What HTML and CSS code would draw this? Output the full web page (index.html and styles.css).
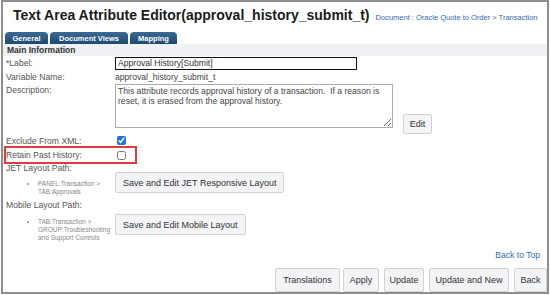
FILE: index.html
```html
<!DOCTYPE html>
<html lang="en">
<head>
    <meta charset="UTF-8">
    <title>Text Area Attribute Editor</title>
    <link rel="stylesheet" href="styles.css">
</head>
<body>
    <div class="frame">
        <div class="header">
            <h1>Text Area Attribute Editor(approval_history_submit_t)</h1>
            <a class="crumb" href="#">Document : Oracle Quote to Order &gt; Transaction</a>
        </div>
        <div class="tabs">
            <span class="tab tab-general">General</span>
            <span class="tab tab-views">Document Views</span>
            <span class="tab tab-mapping">Mapping</span>
        </div>
        <div class="band">Main Information</div>

        <div class="row row-label">
            <label>*Label:</label>
            <input type="text" class="text-input" value="Approval History[Submit]">
        </div>
        <div class="row row-var">
            <label>Variable Name:</label>
            <span class="value">approval_history_submit_t</span>
        </div>
        <div class="row row-desc">
            <label>Description:</label>
            <div class="desc-wrap">
                <textarea class="desc">This attribute records approval history of a transaction.  If a reason is reset, it is erased from the approval history.</textarea>
                <button class="btn btn-edit">Edit</button>
            </div>
        </div>
        <div class="row row-check">
            <label>Exclude From XML:</label>
            <input type="checkbox" class="check" checked>
        </div>
        <div class="row row-check row-retain">
            <label>Retain Past History:</label>
            <input type="checkbox" class="check">
        </div>

        <div class="path-title">JET Layout Path:</div>
        <div class="row row-path row-jet">
            <ul class="path-list">
                <li>PANEL:Transaction &gt;<br>TAB:Approvals</li>
            </ul>
            <button class="btn btn-layout">Save and Edit JET Responsive Layout</button>
        </div>

        <div class="path-title">Mobile Layout Path:</div>
        <div class="row row-path row-mob">
            <ul class="path-list">
                <li>TAB:Transaction &gt;<br>GROUP:Troubleshooting<br>and Support Controls</li>
            </ul>
            <button class="btn btn-layout">Save and Edit Mobile Layout</button>
        </div>

        <div class="back-top"><a href="#">Back to Top</a></div>

        <div class="actions">
            <button class="btn btn-action btn-trans">Translations</button>
            <button class="btn btn-action btn-apply">Apply</button>
            <button class="btn btn-action btn-update">Update</button>
            <button class="btn btn-action btn-new">Update and New</button>
            <button class="btn btn-action btn-back">Back</button>
        </div>
    </div>
</body>
</html>
```

FILE: styles.css
```css
body {
    margin: 0;
    font-family: "Liberation Sans", Arial, sans-serif;
    background: #fff;
    color: #444;
}
.frame {
    margin-left: 1px;
    width: 548px;
    height: 294px;
    box-sizing: border-box;
    border: 2px solid #8e8e8e;
}
.header {
    display: flex;
    align-items: baseline;
    padding: 4px 0 0 10px;
    height: 26px;
}
h1 {
    margin: 0;
    font-size: 14px;
    line-height: 18px;
    font-weight: bold;
    color: #1b1b1b;
}
.crumb {
    margin-left: 6px;
    font-size: 7.5px;
    color: #2d6cb0;
    text-decoration: none;
}
.tabs {
    display: flex;
    gap: 2px;
    padding-left: 2px;
    height: 12px;
}
.tab {
    display: flex;
    align-items: center;
    justify-content: center;
    height: 12px;
    border-radius: 4px 4px 0 0;
    background: linear-gradient(#3a6a93, #1d4a72);
    color: #fff;
    font-size: 7.5px;
    font-weight: bold;
}
.tab-general { width: 43px; }
.tab-views { width: 78px; }
.tab-mapping { width: 47px; }
.band {
    height: 12px;
    line-height: 12px;
    background: #eff1f5;
    padding-left: 4px;
    font-size: 8.5px;
    font-weight: bold;
    color: #333;
}
.row {
    display: grid;
    grid-template-columns: 109px auto;
    align-items: center;
    padding-left: 3px;
    font-size: 8.6px;
}
.row label {
    color: #555;
}
.row-label {
    height: 14px;
}
.text-input {
    width: 242px;
    height: 13px;
    box-sizing: border-box;
    border: 1.5px solid #111;
    padding: 0 2px;
    font-family: inherit;
    font-size: 8.6px;
    color: #333;
    outline: none;
}
.row-var {
    height: 12px;
    margin-top: 1px;
}
.value {
    color: #444;
}
.row-desc {
    align-items: start;
    margin-top: 1px;
    height: 50px;
}
.row-desc label {
    margin-top: 1px;
}
.desc-wrap {
    display: flex;
    align-items: flex-start;
}
.desc {
    width: 278px;
    height: 44px;
    box-sizing: border-box;
    border: 1px solid #aaa;
    padding: 1px 2px;
    resize: vertical;
    font-family: inherit;
    font-size: 8.6px;
    line-height: 10px;
    color: #444;
}
.btn {
    font-family: inherit;
    background: #f3f4f6;
    border: 1px solid #cfd3d8;
    border-radius: 2px;
    color: #333;
    padding: 0;
}
.btn-edit {
    margin: 30px 0 0 10px;
    width: 29px;
    height: 20px;
    font-size: 9px;
}
.row-check {
    height: 13px;
}
.check {
    width: 9px;
    height: 9px;
    margin: 0 0 0 2px;
    accent-color: #1a73e8;
}
.row-retain {
    width: 130px;
    outline: 2px solid #e23a3f;
    outline-offset: -1px;
    margin-left: 2px;
    padding-left: 1px;
    height: 16px;
}
.path-title {
    padding-left: 3px;
    font-size: 8.6px;
    line-height: 10px;
    color: #555;
    height: 9px;
}
.row-path {
    align-items: start;
}
.row-jet {
    height: 28px;
}
.path-list {
    margin: 8px 0 0 0;
    padding-left: 32px;
    font-size: 6.5px;
    line-height: 8px;
    color: #888;
}
.btn-layout {
    height: 21px;
    padding: 0 7px;
    font-size: 9px;
    justify-self: start;
}
.row-mob {
    margin-top: 4px;
    height: 36px;
}
.row-mob .btn-layout {
    margin-top: 1px;
}
.row-mob .path-list {
    margin-top: 5px;
}
.back-top {
    text-align: right;
    padding-right: 7px;
    font-size: 8.6px;
    line-height: 12px;
    height: 19px;
}
.back-top a {
    color: #2d6cb0;
    text-decoration: none;
}
.actions {
    display: flex;
    justify-content: flex-end;
    gap: 5px;
}
.btn-action {
    height: 24px;
    font-size: 9px;
}
.btn-trans { width: 65px; margin-right: -2px; }
.btn-apply { width: 36px; }
.btn-update { width: 40px; }
.btn-new { width: 80px; }
.btn-back { width: 33px; }
```
